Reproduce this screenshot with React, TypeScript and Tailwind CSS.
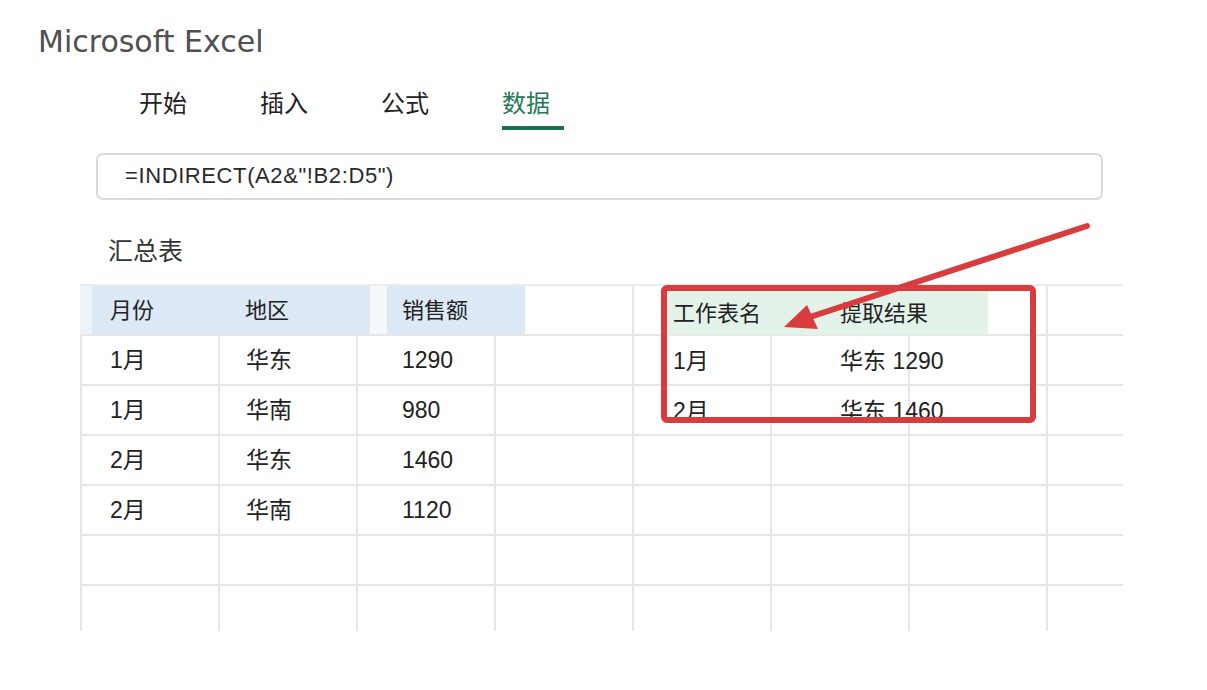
import React from 'react';

const font = { fontFamily: '"Liberation Sans", "Noto Sans CJK SC", sans-serif' };

const tabs = ['开始', '插入', '公式', '数据'];

const rows = [
  ['1月', '华东', '1290'],
  ['1月', '华南', '980'],
  ['2月', '华东', '1460'],
  ['2月', '华南', '1120'],
  ['', '', ''],
  ['', '', ''],
];

function EmptyCells() {
  // the four columns on the right side of the sheet
  return (
    <>
      <div className="w-[138px] h-full border-l-2 border-[#e7e7e7]" />
      <div className="w-[138px] h-full border-l-2 border-[#e7e7e7]" />
      <div className="w-[138px] h-full border-l-2 border-[#e7e7e7]" />
      <div className="w-[77px] h-full border-l-2 border-[#e7e7e7]" />
    </>
  );
}

export default function App() {
  return (
    <div className="relative w-[1207px] h-[690px] bg-white overflow-hidden text-[#222]" style={font}>
      {/* Titulo */}
      <div
        className="pt-[24px] pl-[38px] text-[30px] leading-[36px] text-[#505050]"
        style={{ fontFamily: '"DejaVu Sans", sans-serif' }}
      >
        Microsoft Excel
      </div>

      {/* Abas */}
      <div className="mt-[28px] pl-[139px] flex gap-[59px]">
        {tabs.map((t) => (
          <div key={t} className="w-[62px] flex flex-col">
            <span
              className={
                'text-[24px] leading-[32px] ' + (t === '数据' ? 'text-[#237a52]' : 'text-[#222]')
              }
            >
              {t}
            </span>
            <div className={'mt-[6px] h-[4px] ' + (t === '数据' ? 'bg-[#1f6e4a]' : 'bg-transparent')} />
          </div>
        ))}
      </div>

      {/* Barra de formula */}
      <div className="mt-[23px] ml-[96px] w-[1007px] h-[47px] border-2 border-[#d9d9d9] rounded-[7px] flex items-center pl-[27px] pb-[3px]">
        <span className="text-[22px] text-[#2a2a2a] tracking-[0.6px]">=INDIRECT(A2&amp;"!B2:D5")</span>
      </div>

      <div className="mt-[35px] pl-[108px] text-[25px] leading-[32px] text-[#333]">汇总表</div>

      {/* Planilha */}
      <div className="mt-[17px] ml-[80px] w-[1043px] text-[23px]">
        {/* cabecalho */}
        <div className="flex h-[50px] border-t-2 border-[#ececec] text-[22px]">
          <div className="w-[12px] h-full bg-[#eef3f9]" />
          <div className="w-[278px] h-full bg-[#dde9f7] flex items-center pt-[1px]">
            <span className="w-[153px] pl-[18px]">月份</span>
            <span>地区</span>
          </div>
          <div className="w-[17px] h-full bg-[#f6f9fc]" />
          <div className="w-[138px] h-full bg-[#dde9f7] flex items-center pl-[15px] pt-[1px]">销售额</div>
          <div className="w-[107px] h-full" />
          <EmptyCells />
        </div>

        {rows.map((r, i) => (
          <div
            key={i}
            className={
              'flex border-t-2 border-[#e7e7e7] ' + (i === rows.length - 1 ? 'h-[47px]' : 'h-[50px]')
            }
          >
            <div className="w-[138px] h-full border-l-2 border-[#e7e7e7] flex items-center pl-[28px]">{r[0]}</div>
            <div className="w-[138px] h-full border-l-2 border-[#e7e7e7] flex items-center pl-[26px]">{r[1]}</div>
            <div className="w-[138px] h-full border-l-2 border-[#e7e7e7] flex items-center pl-[44px]">{r[2]}</div>
            <div className="w-[138px] h-full border-l-2 border-[#e7e7e7]" />
            <EmptyCells />
          </div>
        ))}
      </div>

      {/* Destaque vermelho com o resultado */}
      <div className="absolute left-[661px] top-[285px] w-[375px] h-[138px] border-[6px] border-[#d83c3c] rounded-[6px] overflow-hidden text-[23px]">
        <div className="flex h-[44px] text-[22px]">
          <div className="w-[321px] h-full bg-[#e3f3ea] flex items-center">
            <span className="w-[173px] pl-[6px]">工作表名</span>
            <span>提取结果</span>
          </div>
        </div>
        <div className="flex h-[50px] items-center pt-[2px]">
          <span className="w-[173px] pl-[6px]">1月</span>
          <span>华东 1290</span>
        </div>
        <div className="flex h-[50px] items-center pt-[2px]">
          <span className="w-[173px] pl-[6px]">2月</span>
          <span>华东 1460</span>
        </div>
      </div>

      {/* Seta */}
      <svg className="absolute left-0 top-0 pointer-events-none" width="1207" height="690">
        <line x1="1087" y1="226" x2="810" y2="317" stroke="#d83c3c" strokeWidth="6" strokeLinecap="round" />
        <polygon points="784,327 818,329 807,305" fill="#d83c3c" />
      </svg>
    </div>
  );
}
